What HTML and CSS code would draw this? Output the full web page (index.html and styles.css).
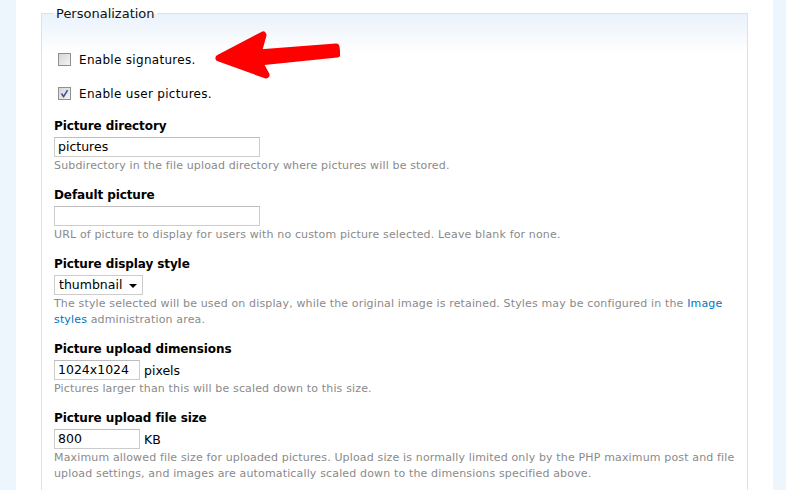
FILE: index.html
```html
<!DOCTYPE html>
<html>
<head>
<meta charset="utf-8">
<link rel="stylesheet" href="styles.css">
</head>
<body>
<div class="page">
  <div class="strip strip-left"></div>
  <div class="content">
    <fieldset class="group">
      <legend class="group-title">Personalization</legend>
      <div class="check check-first">
        <span class="box"></span>
        <span class="check-label">Enable signatures.</span>
      </div>
      <div class="check">
        <span class="box box-checked">
          <svg width="13" height="13" viewBox="0 0 13 13"><path d="M3.5 6.5 L5.6 9.6 L9.6 3.2" fill="none" stroke="#3f4f94" stroke-width="1.6"/></svg>
        </span>
        <span class="check-label">Enable user pictures.</span>
      </div>

      <div class="item item-first">
        <div class="label">Picture directory</div>
        <div class="field"><span class="input input-wide">pictures</span></div>
        <div class="desc">Subdirectory in the file upload directory where pictures will be stored.</div>
      </div>

      <div class="item">
        <div class="label">Default picture</div>
        <div class="field"><span class="input input-wide"></span></div>
        <div class="desc">URL of picture to display for users with no custom picture selected. Leave blank for none.</div>
      </div>

      <div class="item">
        <div class="label">Picture display style</div>
        <div class="field"><span class="select">thumbnail<span class="caret"></span></span></div>
        <div class="desc">The style selected will be used on display, while the original image is retained. Styles may be configured in the <a class="link">Image</a><br><a class="link">styles</a> administration area.</div>
      </div>

      <div class="item">
        <div class="label">Picture upload dimensions</div>
        <div class="field"><span class="input input-small">1024x1024</span><span class="suffix">pixels</span></div>
        <div class="desc">Pictures larger than this will be scaled down to this size.</div>
      </div>

      <div class="item">
        <div class="label">Picture upload file size</div>
        <div class="field"><span class="input input-small">800</span><span class="suffix">KB</span></div>
        <div class="desc">Maximum allowed file size for uploaded pictures. Upload size is normally limited only by the PHP maximum post and file<br>upload settings, and images are automatically scaled down to the dimensions specified above.</div>
      </div>
    </fieldset>
  </div>
  <div class="strip strip-right"></div>
</div>
<svg class="arrow" width="140" height="70" viewBox="200 20 140 70">
  <path d="M219 58 L263 35 L258 53 L336 47 L337 54 L259 62 L266 75 Z" fill="#ff0000" stroke="#ff0000" stroke-width="7" stroke-linejoin="round"/>
</svg>
</body>
</html>
```

FILE: styles.css
```css
html, body {
  margin: 0;
  padding: 0;
  background: #ffffff;
  font-family: "DejaVu Sans", Verdana, sans-serif;
  color: #000;
  overflow: hidden;
}
.page {
  display: flex;
  width: 786px;
  height: 490px;
  overflow: hidden;
}
.strip {
  background: #edf5fd;
  flex: none;
}
.strip-left { width: 16px; }
.strip-right { width: 13px; }
.content {
  flex: 1;
  padding: 5px 25px 0 25px;
}
.group {
  margin: 0;
  border: 1px solid #d6e4ee;
  border-bottom: none;
  padding: 0 4px 0 12px;
  background: linear-gradient(to bottom, #eaf2fb 0px, #ffffff 40px);
  height: 485px;
  box-sizing: border-box;
}
.group-title {
  padding: 0 2px;
  font-size: 13px;
  line-height: 17px;
  color: #111;
}
.check {
  display: flex;
  align-items: center;
  height: 19px;
  margin-top: 15px;
}
.check-first { margin-top: 28px; }
.box {
  width: 11px;
  height: 11px;
  border: 1px solid #8e8f8f;
  background: linear-gradient(135deg, #d6d6d6, #f4f4f4);
  margin-left: 4px;
  margin-right: 8px;
  display: inline-flex;
  position: relative;
}
.box svg {
  position: absolute;
  left: -1px;
  top: -1px;
}
.check-label {
  font-size: 12px;
  letter-spacing: 0.3px;
}
.item { margin-top: 14px; }
.item-first { margin-top: 15px; }
.label {
  font-weight: bold;
  font-size: 12px;
  line-height: 16px;
  letter-spacing: -0.1px;
}
.field {
  display: flex;
  align-items: center;
  margin-top: 3px;
  height: 20px;
}
.input {
  box-sizing: border-box;
  height: 20px;
  border: 1px solid #cccccc;
  border-top-color: #bdbdbd;
  padding: 0 3px;
  font-size: 12.5px;
  line-height: 18px;
  display: inline-block;
  background: #fff;
}
.input-wide { width: 206px; }
.input-small { width: 86px; }
.suffix {
  font-size: 12.5px;
  margin-left: 4px;
}
.select {
  box-sizing: border-box;
  width: 89px;
  height: 20px;
  border: 1px solid #cccccc;
  padding: 0 4px;
  font-size: 12.5px;
  line-height: 18px;
  display: inline-flex;
  align-items: center;
  justify-content: space-between;
}
.caret {
  width: 0;
  height: 0;
  border-left: 4px solid transparent;
  border-right: 4px solid transparent;
  border-top: 4px solid #000;
  margin-right: 1px;
  margin-top: 2px;
}
.desc {
  font-size: 11px;
  line-height: 16px;
  color: #8a8a8a;
  letter-spacing: 0.15px;
  padding-top: 1px;
  margin-bottom: -1px;
  white-space: nowrap;
}
.link { color: #0074bd; }
.arrow {
  position: absolute;
  left: 200px;
  top: 20px;
}
```
